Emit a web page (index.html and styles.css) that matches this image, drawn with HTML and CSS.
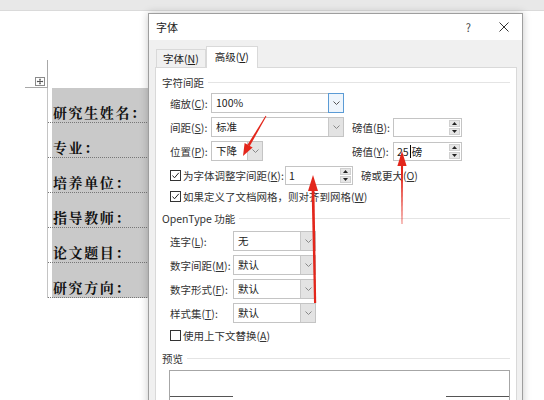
FILE: index.html
```html
<!DOCTYPE html>
<html lang="zh-CN">
<head>
<meta charset="utf-8">
<title>字体</title>
<link rel="stylesheet" href="styles.css">
</head>
<body>
<div class="screen">
  <div class="ribbon"></div>
  <div class="page">
    <div class="crop">
      <span class="move-handle">
        <svg width="10" height="9" viewBox="0 0 10 9"><rect x="0.5" y="0.5" width="9" height="8" fill="#fff" stroke="#8a8a8a"/><path d="M5 1.8V7.2M2 4.5H8" stroke="#555" stroke-width="1"/><path d="M5 1.5L4 2.7H6Z M5 7.5L4 6.3H6Z M1.7 4.5L2.9 3.5V5.5Z M8.3 4.5L7.1 3.5V5.5Z" fill="#555"/></svg>
      </span>
    </div>
    <div class="form-table">
      <div class="form-row"><span>研究生姓名：</span></div>
      <div class="form-row"><span>专业：</span></div>
      <div class="form-row"><span>培养单位：</span></div>
      <div class="form-row"><span>指导教师：</span></div>
      <div class="form-row"><span>论文题目：</span></div>
      <div class="form-row"><span>研究方向：</span></div>
    </div>
  </div>

  <div class="dialog">
    <div class="titlebar">
      <span class="title">字体</span>
      <span class="help">?</span>
      <svg class="close" width="10" height="10" viewBox="0 0 10 10"><path d="M0.5 0.5L9.5 9.5M9.5 0.5L0.5 9.5" stroke="#333" stroke-width="1"/></svg>
    </div>
    <div class="dlg-body">
      <div class="tabs">
        <div class="tab">字体(<u>N</u>)</div>
        <div class="tab active">高级(<u>V</u>)</div>
      </div>
      <div class="pane">
        <div class="group-title g1"><span>字符间距</span></div>

        <div class="frow mt3">
          <span class="flabel">缩放(<u>C</u>):</span>
          <div class="ctl-col">
            <div class="select w133"><span class="val">100%</span><span class="drop focus"><svg width="7" height="4" viewBox="0 0 7 4"><polyline points="0.5,0.5 3.5,3.5 6.5,0.5" fill="none" stroke="#555"/></svg></span></div>
          </div>
        </div>

        <div class="frow mt4">
          <span class="flabel">间距(<u>S</u>):</span>
          <div class="ctl-col">
            <div class="select w133"><span class="val">标准</span><span class="drop"><svg width="7" height="4" viewBox="0 0 7 4"><polyline points="0.5,0.5 3.5,3.5 6.5,0.5" fill="none" stroke="#888"/></svg></span></div>
          </div>
          <span class="flabel">磅值(<u>B</u>):</span>
          <div class="spin"><span class="val"></span><span class="btns"><span class="sb"><svg width="5" height="3" viewBox="0 0 5 3"><path d="M2.5 0L5 3H0Z" fill="#222"/></svg></span><span class="sb"><svg width="5" height="3" viewBox="0 0 5 3"><path d="M0 0H5L2.5 3Z" fill="#222"/></svg></span></span></div>
        </div>

        <div class="frow mt4">
          <span class="flabel">位置(<u>P</u>):</span>
          <div class="ctl-col">
            <div class="select w52"><span class="val">下降</span><span class="drop"><svg width="7" height="4" viewBox="0 0 7 4"><polyline points="0.5,0.5 3.5,3.5 6.5,0.5" fill="none" stroke="#888"/></svg></span></div>
          </div>
          <span class="flabel">磅值(<u>Y</u>):</span>
          <div class="spin"><span class="val">25<i class="caret"></i> 磅</span><span class="btns"><span class="sb"><svg width="5" height="3" viewBox="0 0 5 3"><path d="M2.5 0L5 3H0Z" fill="#222"/></svg></span><span class="sb"><svg width="5" height="3" viewBox="0 0 5 3"><path d="M0 0H5L2.5 3Z" fill="#222"/></svg></span></span></div>
        </div>

        <div class="frow crow mt5 h19">
          <span class="check on"><svg width="9" height="9" viewBox="0 0 9 9"><polyline points="1.5,4.5 3.5,6.8 7.8,1.8" fill="none" stroke="#222" stroke-width="1"/></svg></span>
          <span class="clabel w102">为字体调整字间距(<u>K</u>):</span>
          <div class="spin w68"><span class="val">1</span><span class="btns"><span class="sb"><svg width="5" height="3" viewBox="0 0 5 3"><path d="M2.5 0L5 3H0Z" fill="#222"/></svg></span><span class="sb"><svg width="5" height="3" viewBox="0 0 5 3"><path d="M0 0H5L2.5 3Z" fill="#222"/></svg></span></span></div>
          <span class="after">磅或更大(<u>O</u>)</span>
        </div>

        <div class="frow crow mt2 h18">
          <span class="check on"><svg width="9" height="9" viewBox="0 0 9 9"><polyline points="1.5,4.5 3.5,6.8 7.8,1.8" fill="none" stroke="#222" stroke-width="1"/></svg></span>
          <span class="clabel">如果定义了文档网格，则对齐到网格(<u>W</u>)</span>
        </div>

        <div class="group-title g2"><span>OpenType 功能</span></div>

        <div class="frow mt5">
          <span class="flabel w63">连字(<u>L</u>):</span>
          <div class="select w83"><span class="val">无</span><span class="drop"><svg width="7" height="4" viewBox="0 0 7 4"><polyline points="0.5,0.5 3.5,3.5 6.5,0.5" fill="none" stroke="#888"/></svg></span></div>
        </div>
        <div class="frow mt4">
          <span class="flabel w63">数字间距(<u>M</u>):</span>
          <div class="select w83"><span class="val">默认</span><span class="drop"><svg width="7" height="4" viewBox="0 0 7 4"><polyline points="0.5,0.5 3.5,3.5 6.5,0.5" fill="none" stroke="#888"/></svg></span></div>
        </div>
        <div class="frow mt4">
          <span class="flabel w63">数字形式(<u>F</u>):</span>
          <div class="select w83"><span class="val">默认</span><span class="drop"><svg width="7" height="4" viewBox="0 0 7 4"><polyline points="0.5,0.5 3.5,3.5 6.5,0.5" fill="none" stroke="#888"/></svg></span></div>
        </div>
        <div class="frow mt4">
          <span class="flabel w63">样式集(<u>T</u>):</span>
          <div class="select w83"><span class="val">默认</span><span class="drop"><svg width="7" height="4" viewBox="0 0 7 4"><polyline points="0.5,0.5 3.5,3.5 6.5,0.5" fill="none" stroke="#888"/></svg></span></div>
        </div>

        <div class="frow crow mt4 h16">
          <span class="check"></span>
          <span class="clabel">使用上下文替换(<u>A</u>)</span>
        </div>

        <div class="group-title g3"><span>预览</span></div>

        <div class="preview">
          <div class="preview-lines"><span class="pl"></span><span class="pl"></span></div>
        </div>
      </div>
    </div>
  </div>

  <svg class="arrows" width="544" height="400" viewBox="0 0 544 400">
    <g fill="#e3261b">
      <polygon points="265.6,115.8 266.4,116.2 249.7,146.2 247.5,144.8"/>
      <polygon points="243,156 252.6,147.6 244.6,143.0"/>
      <polygon points="311.6,189 314.4,189 316.2,303 314.0,303"/>
      <polygon points="313,175 318,191 308,191"/>
      <polygon points="400.9,164 403.1,164 402.3,224 401.7,224"/>
      <polygon points="402,151 406.6,166 397.4,166"/>
    </g>
  </svg>
</div>
</body>
</html>
```

FILE: styles.css
```css
* { box-sizing: border-box; }
html, body { margin: 0; padding: 0; }
body {
  width: 544px;
  height: 400px;
  overflow: hidden;
  background: #fff;
  font-family: "Noto Sans CJK SC", "Noto Sans", sans-serif;
}
.screen { position: relative; width: 544px; height: 400px; overflow: hidden; }

.ribbon { height: 11px; background: #e8e8e8; border-bottom: 1px solid #dadada; }

.page { padding-left: 25px; }
.crop {
  width: 23px;
  height: 28px;
  margin-top: 49px;
  border-right: 1px solid #a8a8a8;
  border-bottom: 1px solid #a8a8a8;
  display: flex;
  justify-content: flex-end;
  align-items: flex-end;
  padding: 0 2px 1px 0;
}
.move-handle { display: block; width: 10px; height: 9px; }
.move-handle svg { display: block; }

.form-table { margin-left: 22px; width: 140px; border-left: 1px solid #c4c4c4; }
.form-row {
  height: 35px;
  border-bottom: 1px dotted #777;
  background: linear-gradient(to right, #fff 4px, #c9c9c9 4px);
  display: flex;
  align-items: flex-end;
  padding: 0 0 2px 5px;
}
.form-row span {
  font-family: "Noto Serif CJK SC", "Noto Sans CJK SC", serif;
  font-weight: 700;
  font-size: 14px;
  line-height: 16px;
  letter-spacing: 1.6px;
  color: #111;
  white-space: nowrap;
}

.dialog {
  position: absolute;
  left: 148px;
  top: 13px;
  width: 375px;
  height: 400px;
  background: #f0f0f0;
  border: 1px solid #9e9e9e;
  box-shadow: 0 0 8px rgba(0, 0, 0, 0.22);
  display: flex;
  flex-direction: column;
  font-size: 10.5px;
  color: #222;
}
.titlebar {
  flex: none;
  height: 26px;
  background: #fff;
  display: flex;
  align-items: center;
  padding-left: 7px;
}
.title { flex: 1; font-size: 11px; color: #222; }
.help { font-size: 11px; color: #444; margin-right: 28px; }
.close { display: block; margin-right: 13px; }

.dlg-body { flex: 1; display: flex; flex-direction: column; padding: 6px 5px 0 6px; }
.tabs { display: flex; align-items: flex-end; height: 21px; padding-left: 1px; }
.tab {
  height: 18px;
  padding: 0 6px;
  border: 1px solid #d9d9d9;
  border-bottom: none;
  background: #f0f0f0;
  line-height: 17px;
  white-space: nowrap;
}
.tab.active {
  position: relative;
  z-index: 1;
  height: 22px;
  margin-bottom: -1px;
  padding: 0 8px;
  background: #fff;
  line-height: 20px;
}
.pane { flex: 1; background: #fff; border: 1px solid #d9d9d9; display: flex; flex-direction: column; }

.group-title { display: flex; align-items: center; height: 16px; margin: 0 6px; white-space: nowrap; color: #333; }
.group-title span { padding-right: 4px; }
.group-title::after { content: ""; flex: 1; height: 1px; background: #e4e4e4; }
.g1 { margin-top: 6px; }
.g2 { margin-top: 5px; }
.g3 { margin-top: 7px; }

.frow { display: flex; align-items: center; height: 20px; margin-left: 14px; white-space: nowrap; }
.mt2 { margin-top: 2px; }
.mt3 { margin-top: 3px; }
.mt4 { margin-top: 4px; }
.mt5 { margin-top: 5px; }
.h19 { height: 19px; }
.h18 { height: 18px; }
.h16 { height: 16px; }

.flabel { width: 41px; flex: none; color: #333; }
.flabel.w63 { width: 63px; }
.ctl-col { width: 141px; flex: none; }

.select { display: flex; height: 20px; border: 1px solid #c4c4c4; background: #fff; }
.select.w133 { width: 133px; }
.select.w52 { width: 52px; }
.select.w83 { width: 83px; }
.select .val { flex: 1; padding-left: 4px; line-height: 18px; color: #222; overflow: hidden; }
.drop {
  width: 15px;
  flex: none;
  background: #e3e3e3;
  border-left: 1px solid #c8c8c8;
  display: flex;
  align-items: center;
  justify-content: center;
}
.drop.focus { background: #eef5fc; border: 1px solid #5b9bd5; margin: -1px -1px -1px 0; width: 16px; }
.drop svg { display: block; }

.spin { display: flex; width: 69px; height: 19px; border: 1px solid #c4c4c4; background: #fff; flex: none; }
.spin.w68 { width: 68px; }
.spin .val { flex: 1; padding-left: 3px; line-height: 17px; color: #222; display: flex; align-items: center; }
.caret { display: inline-block; width: 1px; height: 13px; background: #000; margin: 0 1px 0 1px; }
.btns { width: 12px; flex: none; display: flex; flex-direction: column; padding: 1px 1px 1px 0; gap: 1px; }
.sb { flex: 1; background: #e6e6e6; border: 1px solid #d0d0d0; display: flex; align-items: center; justify-content: center; }
.sb svg { display: block; }

.check { width: 11px; height: 11px; flex: none; border: 1px solid #333; background: #fff; margin-right: 2px; display: flex; align-items: center; justify-content: center; }
.check svg { display: block; }
.clabel { color: #333; }
.clabel.w102 { width: 102px; flex: none; }
.after { margin-left: 8px; color: #333; }

.preview { margin: 4px 6px 0 13px; height: 60px; border: 1px solid #a6a6a6; }
.preview-lines { display: flex; justify-content: space-between; margin-top: 25px; }
.pl { width: 63px; height: 1px; background: #555; }

.arrows { position: absolute; left: 0; top: 0; z-index: 10; pointer-events: none; }
```
